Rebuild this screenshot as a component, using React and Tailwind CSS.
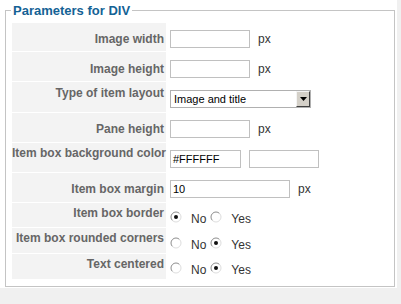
import React from "react";

const rows = [
  { label: "Image width", h: "h-[29px]", lp: "pt-[9px]", vp: "pt-[7px]", kind: "text", w: "w-[80px]", unit: true },
  { label: "Image height", h: "h-[30px]", lp: "pt-[10px]", vp: "pt-[8px]", kind: "text", w: "w-[80px]", unit: true },
  { label: "Type of item layout", h: "h-[31px]", lp: "pt-[4px]", vp: "pt-[8px]", kind: "select" },
  { label: "Pane height", h: "h-[30px]", lp: "pt-[9px]", vp: "pt-[7px]", kind: "text", w: "w-[80px]", unit: true },
  { label: "Item box background color", h: "h-[30px]", lp: "pt-[3px]", vp: "pt-[7px]", kind: "color" },
  { label: "Item box margin", h: "h-[30px]", lp: "pt-[9px]", vp: "pt-[7px]", kind: "text", w: "w-[120px]", value: "10", unit: true },
  { label: "Item box border", h: "h-[25px]", lp: "pt-[3px]", vp: "pt-[8px]", kind: "radio", yes: false },
  { label: "Item box rounded corners", h: "h-[26px]", lp: "pt-[3px]", vp: "pt-[9px]", kind: "radio", yes: true },
  { label: "Text centered", h: "h-[26px]", lp: "pt-[3px]", vp: "pt-[8px]", kind: "radio", yes: true },
];

function Radio({ checked }) {
  return (
    <svg width="12" height="12" viewBox="0 0 12 12" className="shrink-0">
      <circle cx="6" cy="6" r="5" fill="#fff" />
      <path d="M2.46 9.54 A5 5 0 0 1 9.54 2.46" fill="none" stroke="#8c8c8c" strokeWidth="1" />
      <path d="M9.54 2.46 A5 5 0 0 1 2.46 9.54" fill="none" stroke="#dedede" strokeWidth="1" />
      {checked && <circle cx="6" cy="6" r="2" fill="#111" />}
    </svg>
  );
}

function TextBox({ w, value }) {
  return (
    <div className={`${w} h-[18px] border border-[#c0c0c0] bg-white px-[2px] text-[11px] leading-[16px] text-black`}>
      {value}
    </div>
  );
}

function Unit() {
  return <span className="ml-[8px] text-[12px] leading-[18px] text-[#333]">px</span>;
}

function Select() {
  return (
    <div className="flex w-[141px] h-[18px] border border-[#b0b0b0] bg-white">
      <span className="flex-1 pl-[3px] text-[11px] leading-[16px] text-black">Image and title</span>
      <div className="flex w-[14px] h-[16px] items-center justify-center border-t border-l border-t-[#f4f4f4] border-l-[#f4f4f4] border-b border-r border-b-[#404040] border-r-[#404040] bg-[#d4d0c8]">
        <svg width="7" height="4" viewBox="0 0 7 4">
          <path d="M0 0 H7 L3.5 4 Z" fill="#000" />
        </svg>
      </div>
    </div>
  );
}

function Value({ row }) {
  if (row.kind === "select") return <Select />;
  if (row.kind === "color")
    return (
      <div className="flex gap-[8px]">
        <TextBox w="w-[71px]" value="#FFFFFF" />
        <TextBox w="w-[70px]" />
      </div>
    );
  if (row.kind === "radio")
    return (
      <div className="flex items-start text-[12px] leading-[14px] text-[#333]">
        <Radio checked={!row.yes} />
        <span className="ml-[9px] mt-[1px]">No</span>
        <span className="ml-[4px]">
          <Radio checked={row.yes} />
        </span>
        <span className="ml-[9px] mt-[1px]">Yes</span>
      </div>
    );
  return (
    <div className="flex items-center">
      <TextBox w={row.w} value={row.value} />
      {row.unit && <Unit />}
    </div>
  );
}

export default function App() {
  return (
    <div className="min-h-screen bg-[#f0f0f0] font-['Liberation_Sans',Arial,sans-serif]">
      <div className="w-[397px] bg-white pt-[3px] pb-[1px] pl-[5px]">
        <fieldset className="w-[390px] border border-[#c4c4c4] px-[6px] pt-[5px] pb-[6px] shadow-[1px_1px_0_#fff]">
          <legend className="ml-[-1px] px-[2px] text-[13px] leading-[15px] font-bold text-[#146295]">
            Parameters for DIV
          </legend>
          {rows.map((row) => (
            <div key={row.label} className={`flex ${row.h}`}>
              <div
                className={`w-[154px] shrink-0 bg-[#f3f3f3] border-b border-white pr-[2px] text-right text-[12px] leading-[14px] font-bold text-[#666] whitespace-nowrap ${row.lp}`}
              >
                {row.label}
              </div>
              <div className={`flex-1 pl-[4px] ${row.vp}`}>
                <Value row={row} />
              </div>
            </div>
          ))}
        </fieldset>
      </div>
    </div>
  );
}
